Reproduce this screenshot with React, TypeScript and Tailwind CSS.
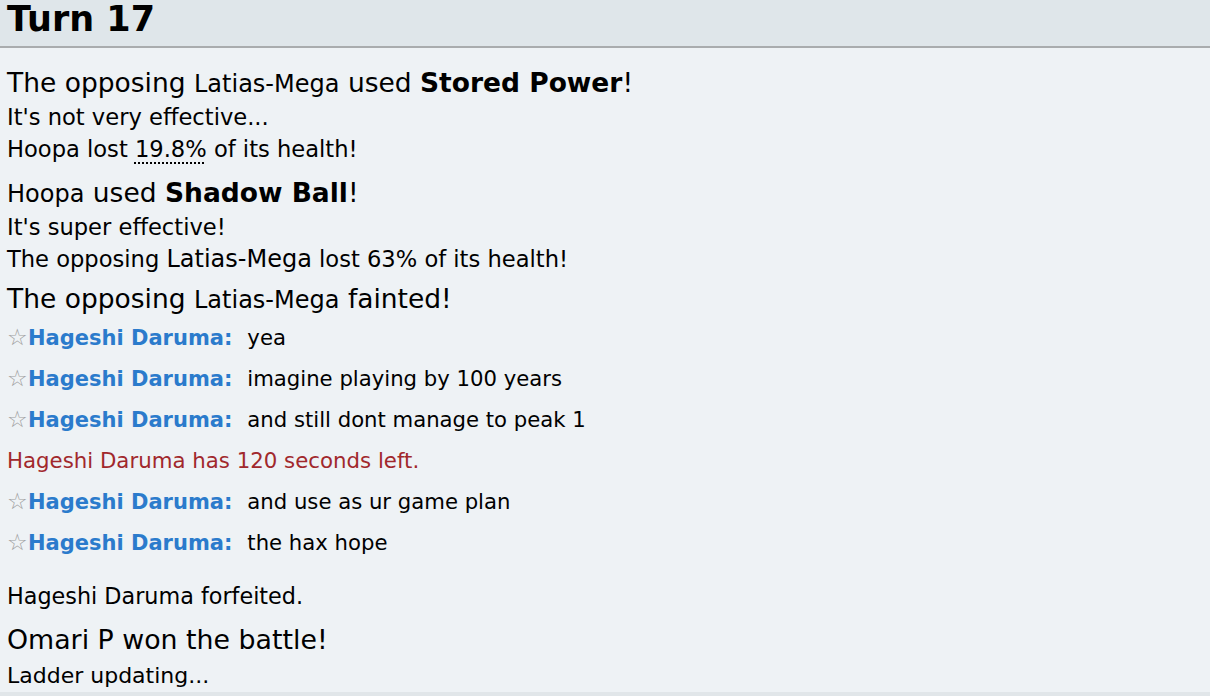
import React from "react";

const Name = ({ children }: { children: React.ReactNode }) => (
  <span className="text-[24px]">{children}</span>
);

const Chat = ({ msg }: { msg: string }) => (
  <div className="h-[41px] leading-[41px] whitespace-nowrap flex items-baseline">
    <span className="text-[#a0a0a0] text-[23px] w-[21px]">☆</span>
    <span className="font-bold text-[#2b7bcc] text-[21px]">Hageshi Daruma:</span>
    <span className="ml-[15px] text-black text-[21.2px]">{msg}</span>
  </div>
);

export default function App() {
  return (
    <div className="w-[1210px] h-[696px] overflow-hidden bg-[#eef2f5] text-black font-['DejaVu_Sans',sans-serif] flex flex-col">
      <div className="h-[48px] shrink-0 bg-[#dfe6ea] border-b-2 border-[#a9acae] px-[7px]">
        <h2 className="text-[35px] font-bold leading-[38px]">Turn 17</h2>
      </div>
      <div className="px-[7px] flex-1 flex flex-col">
        <div className="mt-[17px] h-[36px] leading-[36px] text-[26.5px] whitespace-nowrap">
          The opposing <Name>Latias-Mega</Name> used <strong>Stored Power</strong>!
        </div>
        <div className="h-[32px] leading-[32px] text-[22.6px]">It's not very effective...</div>
        <div className="h-[32px] leading-[32px] text-[22.6px]">
          Hoopa lost{" "}
          <span className="underline decoration-dotted decoration-[1.5px] underline-offset-[5px]">19.8%</span>{" "}
          of its health!
        </div>
        <div className="mt-[10px] h-[36px] leading-[36px] text-[26.5px] whitespace-nowrap">
          <Name>Hoopa</Name> used <strong>Shadow Ball</strong>!
        </div>
        <div className="h-[32px] leading-[32px] text-[22.6px]">It's super effective!</div>
        <div className="h-[32px] leading-[32px] text-[22.6px]">
          The opposing <Name>Latias-Mega</Name> lost 63% of its health!
        </div>
        <div className="mt-[6px] h-[36px] leading-[36px] text-[26.5px] whitespace-nowrap">
          The opposing <Name>Latias-Mega</Name> fainted!
        </div>
        <Chat msg="yea" />
        <Chat msg="imagine playing by 100 years" />
        <Chat msg="and still dont manage to peak 1" />
        <div className="h-[41px] leading-[41px] text-[21.3px] text-[#a1282c]">
          Hageshi Daruma has 120 seconds left.
        </div>
        <Chat msg="and use as ur game plan" />
        <Chat msg="the hax hope" />
        <div className="mt-[17px] h-[32px] leading-[32px] text-[22.3px]">Hageshi Daruma forfeited.</div>
        <div className="mt-[10px] h-[36px] leading-[36px] text-[26.8px]">Omari P won the battle!</div>
        <div className="mt-[2px] h-[32px] leading-[32px] text-[22px]">Ladder updating...</div>
      </div>
      <div className="h-[4px] shrink-0 bg-[#e1e6e9]" />
    </div>
  );
}
